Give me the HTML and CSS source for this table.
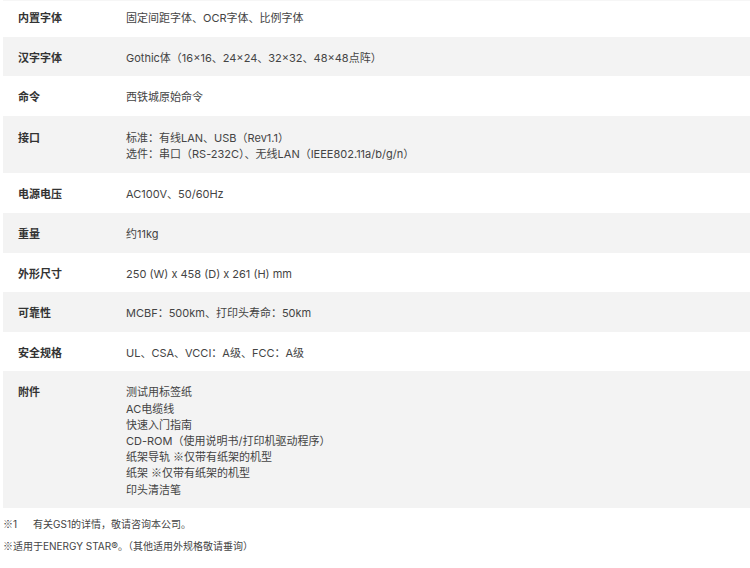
FILE: index.html
```html
<!DOCTYPE html>
<html lang="zh-CN">
<head>
<meta charset="utf-8">
<title>规格</title>
<link rel="stylesheet" href="styles.css">
</head>
<body>
<div class="top-edge"></div>
<div class="spec">
  <div class="row"><div class="label">内置字体</div><div class="value">固定间距字体、OCR字体、比例字体</div></div>
  <div class="row alt"><div class="label">汉字字体</div><div class="value">Gothic体（16×16、24×24、32×32、48×48点阵）</div></div>
  <div class="row"><div class="label">命令</div><div class="value">西铁城原始命令</div></div>
  <div class="row alt two"><div class="label">接口</div><div class="value">标准：有线LAN、USB（Rev1.1）<br>选件：串口（RS-232C）、无线LAN（IEEE802.11a/b/g/n）</div></div>
  <div class="row"><div class="label">电源电压</div><div class="value">AC100V、50/60Hz</div></div>
  <div class="row alt"><div class="label">重量</div><div class="value">约11kg</div></div>
  <div class="row"><div class="label">外形尺寸</div><div class="value">250 (W) x 458 (D) x 261 (H) mm</div></div>
  <div class="row alt"><div class="label">可靠性</div><div class="value">MCBF：500km、打印头寿命：50km</div></div>
  <div class="row"><div class="label">安全规格</div><div class="value">UL、CSA、VCCI：A级、FCC：A级</div></div>
  <div class="row alt"><div class="label">附件</div><div class="value">测试用标签纸<br>AC电缆线<br>快速入门指南<br>CD-ROM（使用说明书/打印机驱动程序）<br>纸架导轨 <span class="ref">※</span>仅带有纸架的机型<br>纸架 <span class="ref">※</span>仅带有纸架的机型<br>印头清洁笔</div></div>
</div>
<div class="notes">
  <p class="note"><span class="mark"><span class="ref">※</span>1</span>有关GS1的详情，敬请咨询本公司。</p>
  <p class="note"><span class="ref">※</span>适用于ENERGY STAR®。（其他适用外规格敬请垂询）</p>
</div>
</body>
</html>
```
FILE: styles.css
```css
html, body {
  margin: 0;
  padding: 0;
  background: #fff;
}
body {
  font-family: "Inter", "Noto Sans CJK SC", sans-serif;
  color: #444;
  width: 750px;
  overflow: hidden;
}
.top-edge {
  height: 1px;
  background: #f6f6f6;
  margin-left: 3px;
}
.spec {
  margin-left: 3px;
  margin-top: -4px;
}
.row {
  display: grid;
  grid-template-columns: 123px 1fr;
  padding: 13px 0 10.4px;
  font-size: 11px;
  line-height: 16.2px;
}
.row.alt {
  background: #f3f3f3;
}
.row.two {
  padding-top: 13.9px;
  padding-bottom: 11.3px;
}
.label {
  padding-left: 15px;
  font-weight: bold;
  color: #333;
}
.value {
  color: #444;
}
.ref {
  font-family: "Noto Sans CJK SC", sans-serif;
  line-height: 1;
}
.notes {
  padding-left: 3px;
  padding-top: 9px;
  font-size: 10px;
  color: #444;
}
.note {
  margin: 0 0 8px;
  line-height: 14px;
}
.mark {
  display: inline-block;
  width: 30px;
}
```
